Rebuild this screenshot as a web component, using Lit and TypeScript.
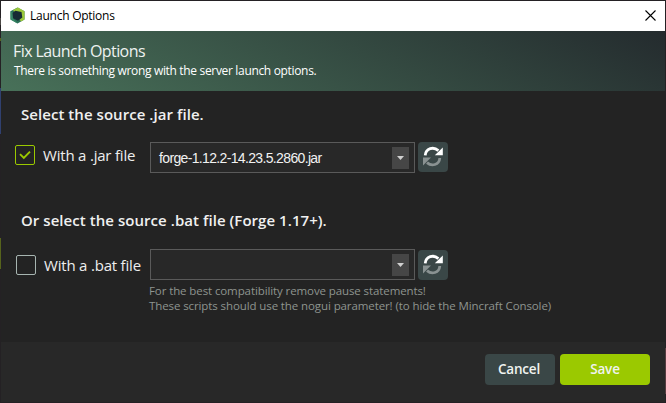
import { LitElement, html, css } from "lit";
import { customElement, property } from "lit/decorators.js";

@customElement("refresh-button")
class RefreshButton extends LitElement {
  static styles = css`
    :host { display: block; width: 30px; height: 30px; }
    .btn { display: block; width: 30px; height: 30px; padding: 0; border: 0; border-radius: 4px; background: #3a4747; }
    svg { display: block; }
  `;
  render() {
    return html`<button class="btn" aria-label="Refresh">
      <svg width="30" height="30" viewBox="0 0 30 30">
        <path d="M7.2 13.4C7.8 6.2 15.5 4.2 20.4 8.6" fill="none" stroke="#fff" stroke-width="2.8" />
        <path d="M16.8 13.3H24.8V5.6Z" fill="#fff" />
        <path d="M21.8 16C21.2 23.2 13.6 24.6 9 20.6" fill="none" stroke="#8a9292" stroke-width="2.8" />
        <path d="M5 15.6H13L5 23.6Z" fill="#8a9292" />
      </svg>
    </button>`;
  }
}

@customElement("combo-box")
class ComboBox extends LitElement {
  @property() value = "";
  static styles = css`
    :host { display: flex; box-sizing: border-box; width: 265px; height: 31px; border: 1px solid #5a5a5a; background: #282828; align-items: center; justify-content: space-between; padding: 0 5px 0 8px; }
    .value { font: 14px/20px "Liberation Sans", sans-serif; color: #f2f2f2; letter-spacing: -0.65px; white-space: nowrap; padding-top: 1px; }
    .arrow { width: 17px; height: 22px; background: #464646; display: flex; align-items: center; justify-content: center; }
    svg { display: block; }
  `;
  render() {
    return html`<span class="value">${this.value}</span>
      <span class="arrow"><svg width="17" height="22"><path d="M5 9H12L8.5 13Z" fill="#d0d0d0" /></svg></span>`;
  }
}

@customElement("app-root")
class AppRoot extends LitElement {
  static styles = css`
    :host { display: block; width: 666px; height: 403px; font-family: "Open Sans", "Noto Sans", sans-serif; white-space: nowrap; }
    .frame { box-sizing: border-box; width: 666px; height: 403px; padding: 1px; background: linear-gradient(#4c4946, #4c4946) 0 18px / 1px 7px no-repeat, linear-gradient(#56631c, #56631c) 0 38px / 1px 3px no-repeat, linear-gradient(#30406f, #30406f) 0 88px / 1px 46px no-repeat, linear-gradient(#56631c, #56631c) 0 238px / 1px 31px no-repeat, linear-gradient(#553c40, #553c40) 665px 348px / 1px 46px no-repeat, #242124; display: flex; flex-direction: column; }
    .titlebar { height: 30px; background: #fff; display: flex; align-items: center; padding: 0 9px 1px 9px; box-sizing: border-box; color: #000; }
    .titlebar svg { display: block; flex: none; }
    .caption { font-size: 12px; line-height: 16px; margin: 1px 0 0 5px; flex: 1; letter-spacing: -0.25px; }
    .banner { height: 60px; box-sizing: border-box; padding: 9px 0 0 12px; color: #eef2f0; background: linear-gradient(27deg, #487159 0%, #242b2e 100%); }
    .title { font-size: 16px; line-height: 22px; letter-spacing: -0.58px; }
    .subtitle { font-size: 12px; line-height: 16px; padding: 1px 0 0 1px; color: #fff; letter-spacing: -0.33px; }
    .body { height: 251px; background: #232323; box-sizing: border-box; padding: 13px 0 0 14px; }
    .heading { font-size: 15px; line-height: 20px; font-weight: 600; color: #f0f0f0; padding-left: 6px; letter-spacing: 0.05px; }
    .heading.b { margin-top: 37px; }
    .row { display: flex; align-items: center; height: 31px; margin-top: 18px; }
    .row.b { margin-top: 19px; }
    .pick { width: 135px; display: flex; align-items: center; font-size: 15px; color: #eee; }
    .row .pick { padding-bottom: 5px; }
    .row.b .pick { box-sizing: border-box; padding: 1px 0 0 1px; }
    .box { box-sizing: border-box; width: 20px; height: 20px; border: 1px solid #a7b5b1; border-radius: 2px; margin-right: 8px; flex: none; }
    .box.on { border-color: #9bc900; }
    .label { line-height: 20px; letter-spacing: -0.2px; }
    refresh-button { margin-left: 3px; align-self: flex-start; }
    .row.b refresh-button { align-self: flex-end; }
    .hint { font-size: 11.5px; line-height: 15px; color: #8e948f; padding-left: 134px; margin-top: 3px; letter-spacing: -0.1px; }
    .footer { height: 60px; background: #282828; display: flex; box-sizing: border-box; padding: 12px 15px 0 0; justify-content: flex-end; gap: 5px; }
    .action { height: 31px; border: 0; padding: 0 2px 0 0; border-radius: 4px; font: 600 13.5px/31px "Open Sans", sans-serif; color: #f0f3f0; background: #3a4747; width: 70px; letter-spacing: -0.2px; }
    .save { width: 90px; padding: 0; background: #9bc900; }
  `;
  render() {
    return html`<div class="frame">
      <div class="titlebar">
        <svg width="15" height="17" viewBox="0 0 15 17">
          <path d="M7.5 .5L14.5 4.2V12.5L7.5 16.5L.5 12.5V4.2Z" fill="#2b7058" />
          <path d="M3 3L8 .5L14.5 4.2V12.5L11 14.5Z" fill="#9bc83a" />
          <path d="M.5 4.2L3.5 6V12L7.5 16.5L.5 12.5Z" fill="#398a67" />
          <path d="M5.3 3.8L11.5 5L12.3 10.5L8 13.7L3 11.3L2.5 6Z" fill="#172b34" />
        </svg>
        <span class="caption">Launch Options</span>
        <svg width="11" height="11" viewBox="0 0 11 11"><path d="M.5 .5L10.5 10.5M10.5 .5L.5 10.5" stroke="#000" stroke-width="1.1" /></svg>
      </div>
      <div class="banner">
        <div class="title">Fix Launch Options</div>
        <div class="subtitle">There is something wrong with the server launch options.</div>
      </div>
      <div class="body">
        <div class="heading">Select the source .jar file.</div>
        <div class="row">
          <div class="pick"><span class="box on"><svg width="18" height="18"><path d="M4 8.2L7.8 12L14 5.6" fill="none" stroke="#9bc900" stroke-width="1.9" /></svg></span><span class="label">With a .jar file</span></div>
          <combo-box value="forge-1.12.2-14.23.5.2860.jar"></combo-box>
          <refresh-button></refresh-button>
        </div>
        <div class="heading b">Or select the source .bat file (Forge 1.17+).</div>
        <div class="row b">
          <div class="pick"><span class="box"></span><span class="label">With a .bat file</span></div>
          <combo-box></combo-box>
          <refresh-button></refresh-button>
        </div>
        <div class="hint">
          <div>For the best compatibility remove pause statements!</div>
          <div>These scripts should use the nogui parameter! (to hide the Mincraft Console)</div>
        </div>
      </div>
      <div class="footer">
        <button class="action">Cancel</button>
        <button class="action save">Save</button>
      </div>
    </div>`;
  }
}
